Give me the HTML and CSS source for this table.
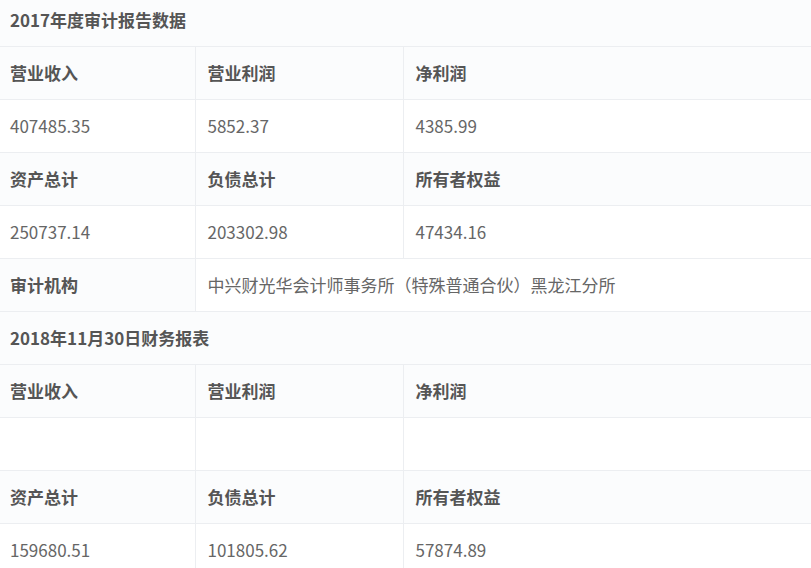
FILE: index.html
```html
<!DOCTYPE html>
<html lang="zh-CN">
<head>
<meta charset="utf-8">
<title>财务数据</title>
<link rel="stylesheet" href="styles.css">
</head>
<body>
<table class="fin">
  <colgroup>
    <col class="c1"><col class="c2"><col class="c3">
  </colgroup>
  <tbody>
    <tr class="title first"><td colspan="3">2017年度审计报告数据</td></tr>
    <tr class="head"><td>营业收入</td><td>营业利润</td><td>净利润</td></tr>
    <tr class="val"><td>407485.35</td><td>5852.37</td><td>4385.99</td></tr>
    <tr class="head"><td>资产总计</td><td>负债总计</td><td>所有者权益</td></tr>
    <tr class="val"><td>250737.14</td><td>203302.98</td><td>47434.16</td></tr>
    <tr class="val"><td class="label">审计机构</td><td colspan="2">中兴财光华会计师事务所（特殊普通合伙）黑龙江分所</td></tr>
    <tr class="title"><td colspan="3">2018年11月30日财务报表</td></tr>
    <tr class="head"><td>营业收入</td><td>营业利润</td><td>净利润</td></tr>
    <tr class="val"><td></td><td></td><td></td></tr>
    <tr class="head"><td>资产总计</td><td>负债总计</td><td>所有者权益</td></tr>
    <tr class="val"><td>159680.51</td><td>101805.62</td><td>57874.89</td></tr>
  </tbody>
</table>
</body>
</html>
```

FILE: styles.css
```css
html, body {
  margin: 0;
  padding: 0;
  background: #ffffff;
}
body {
  font-family: "Noto Sans CJK SC", "Noto Sans", sans-serif;
  font-size: 17px;
  color: #666666;
  overflow: hidden;
}
.fin {
  width: 811px;
  border-collapse: collapse;
  table-layout: fixed;
}
.c1 { width: 195px; }
.c2 { width: 208px; }
.c3 { width: 408px; }
.fin td {
  height: 53px;
  padding: 0 12px;
  border: 1px solid #eceef1;
  box-sizing: border-box;
  vertical-align: middle;
  white-space: nowrap;
  line-height: 1;
}
.fin tr > td:first-child {
  padding-left: 10px;
  border-left: none;
}
.fin tr > td:last-child {
  border-right: none;
}
.title td {
  background: #fbfcfd;
  font-weight: 700;
  color: #555555;
}
.title.first td {
  height: 46px;
  padding-bottom: 6px;
  border-top: none;
}
.head td {
  background: #fbfcfd;
  font-weight: 700;
  color: #555555;
}
.val td {
  background: #ffffff;
  color: #666666;
}
.val td.label {
  background: #fbfcfd;
  font-weight: 700;
  color: #555555;
}
```
